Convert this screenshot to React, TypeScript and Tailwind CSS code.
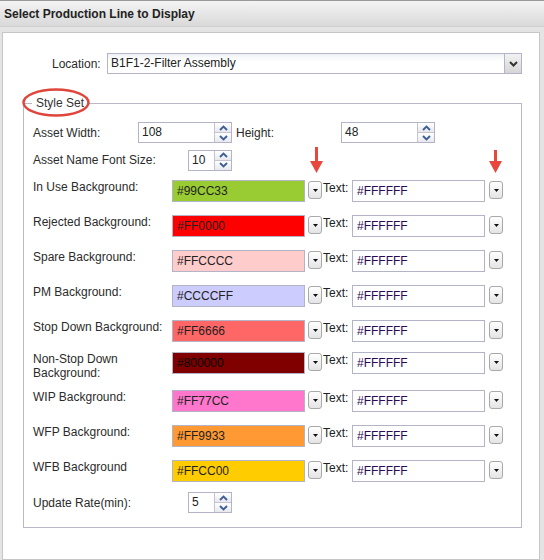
import React from "react";

const colorRows: { label: React.ReactNode; color: string; h: string; text: string }[] = [
  { label: "In Use Background:", color: "#99CC33", h: "h-[35px]", text: "text-[#222]" },
  { label: "Rejected Background:", color: "#FF0000", h: "h-[35px]", text: "text-[#222]" },
  { label: "Spare Background:", color: "#FFCCCC", h: "h-[35px]", text: "text-[#222]" },
  { label: "PM Background:", color: "#CCCCFF", h: "h-[35px]", text: "text-[#222]" },
  { label: "Stop Down Background:", color: "#FF6666", h: "h-[32px]", text: "text-[#222]" },
  {
    label: (
      <>
        Non-Stop Down
        <br />
        Background:
      </>
    ),
    color: "#800000",
    h: "h-[38px]",
    text: "text-black",
  },
  { label: "WIP Background:", color: "#FF77CC", h: "h-[35px]", text: "text-[#222]" },
  { label: "WFP Background:", color: "#FF9933", h: "h-[35px]", text: "text-[#222]" },
  { label: "WFB Background", color: "#FFCC00", h: "h-[32px]", text: "text-[#222]" },
];

function Chevron({ up }: { up?: boolean }) {
  return (
    <svg width="9" height="6" viewBox="0 0 9 6">
      <path
        d={up ? "M1 5 L4.5 1.5 L8 5" : "M1 1 L4.5 4.5 L8 1"}
        fill="none"
        stroke="#3d5f95"
        strokeWidth="1.9"
      />
    </svg>
  );
}

function Spinner({ value, w }: { value: string; w: string }) {
  return (
    <div className={`${w} h-[21px] flex border border-[#b4b4c8] bg-white`}>
      <div className="flex-1 pl-[3px] text-[12px] leading-[19px] text-[#222]">{value}</div>
      <div className="w-[17px] flex flex-col border-l border-[#c4c4d0]">
        <div className="flex-1 flex items-center justify-center bg-gradient-to-b from-white to-[#e8e8ee] border-b border-[#c4c4d0]">
          <Chevron up />
        </div>
        <div className="flex-1 flex items-center justify-center bg-gradient-to-b from-white to-[#e8e8ee]">
          <Chevron />
        </div>
      </div>
    </div>
  );
}

function DropBtn() {
  return (
    <div className="w-[14px] h-[18px] rounded-[3px] border border-[#a9a9a9] bg-gradient-to-b from-white to-[#e4e4e4] flex items-end justify-center pb-[6px]">
      <svg width="5" height="3" viewBox="0 0 5 3">
        <path d="M0 0 L5 0 L2.5 3 Z" fill="#111" />
      </svg>
    </div>
  );
}

function Arrow({ className, h }: { className: string; h: number }) {
  return (
    <svg className={`absolute ${className}`} width="13" height={h} viewBox={`0 0 13 ${h}`}>
      <rect x="5" y="0" width="3" height={h - 11} fill="#e8473d" />
      <path d={`M0 ${h - 12} L13 ${h - 12} L6.5 ${h} Z`} fill="#e8473d" />
    </svg>
  );
}

export default function App() {
  return (
    <div className="relative w-[544px] h-[560px] overflow-hidden bg-[#e4e4e4] font-['Liberation_Sans',Arial,sans-serif] text-[12px] text-[#2b2b2b]">
      {/* barre de titre */}
      <div className="h-[27px] border-t border-t-[#9a9a9a] border-b border-b-[#cfcfcf] bg-gradient-to-b from-[#f4f4f4] to-[#d9d9d9] px-[4px] flex items-center font-bold text-[#222]">
        Select Production Line to Display
      </div>

      <div className="mt-[5px] ml-[2px] w-[538px] h-[528px] bg-white border border-[#c6c6c6] pt-[20px]">
        <div className="flex items-center h-[21px] pl-[49px]">
          <span className="w-[55px]">Location:</span>
          <div className="w-[415px] h-[21px] flex border border-[#b4b4c8] bg-gradient-to-b from-[#eef2f4] to-white to-[40%]">
            <div className="flex-1 pl-[3px] leading-[19px] text-[#222]">B1F1-2-Filter Assembly</div>
            <div className="w-[17px] flex items-center justify-center border-l border-[#b4b4c8] bg-gradient-to-b from-[#f2f2f2] to-[#d6d6d6]">
              <svg width="9" height="6" viewBox="0 0 9 6">
                <path d="M1 1 L4.5 4.5 L8 1" fill="none" stroke="#333" strokeWidth="2" />
              </svg>
            </div>
          </div>
        </div>

        <fieldset className="ml-[20px] mt-[22px] w-[499px] border border-[#b8b8c8] pl-[9px] pb-[14px]">
          <legend className="ml-[-1px] px-[4px] leading-[14px] text-[#333]">Style Set</legend>

          <div className="pt-[12px]">
            <div className="flex items-center h-[21px]">
              <span className="w-[105px]">Asset Width:</span>
              <Spinner value="108" w="w-[94px]" />
              <span className="ml-[4px] w-[105px]">Height:</span>
              <Spinner value="48" w="w-[94px]" />
            </div>

            <div className="mt-[6px] flex items-center h-[22px]">
              <span className="w-[155px]">Asset Name Font Size:</span>
              <Spinner value="10" w="w-[44px]" />
            </div>

            <div className="mt-[9px]">
              {colorRows.map((r, i) => (
                <div key={i} className={`${r.h} flex items-start`}>
                  <span className="w-[139px] leading-[14px]">{r.label}</span>
                  <div
                    className={`w-[133px] h-[22px] border border-[#b4b4c8] pl-[4px] leading-[21px] ${r.text}`}
                    style={{ backgroundColor: r.color }}
                  >
                    {r.color}
                  </div>
                  <div className="ml-[3px] mt-[1px]">
                    <DropBtn />
                  </div>
                  <span className="ml-[1px] mt-[1px] w-[29px] leading-[14px] text-[#222]">Text:</span>
                  <div className="w-[133px] h-[22px] border border-[#b4b4c8] bg-white pl-[4px] leading-[21px] text-[#2a0a55]">
                    #FFFFFF
                  </div>
                  <div className="ml-[4px] mt-[1px]">
                    <DropBtn />
                  </div>
                </div>
              ))}
            </div>

            <div className="flex items-center h-[21px]">
              <span className="w-[155px]">Update Rate(min):</span>
              <Spinner value="5" w="w-[44px]" />
            </div>
          </div>
        </fieldset>
      </div>

      {/* annotations */}
      <svg className="absolute left-[22px] top-[88px]" width="70" height="30" viewBox="0 0 70 30">
        <ellipse cx="34" cy="14.5" rx="32.5" ry="13" fill="none" stroke="#e0453b" strokeWidth="2.5" />
      </svg>
      <Arrow className="left-[310px] top-[147px]" h={26} />
      <Arrow className="left-[489px] top-[150px]" h={23} />
    </div>
  );
}
